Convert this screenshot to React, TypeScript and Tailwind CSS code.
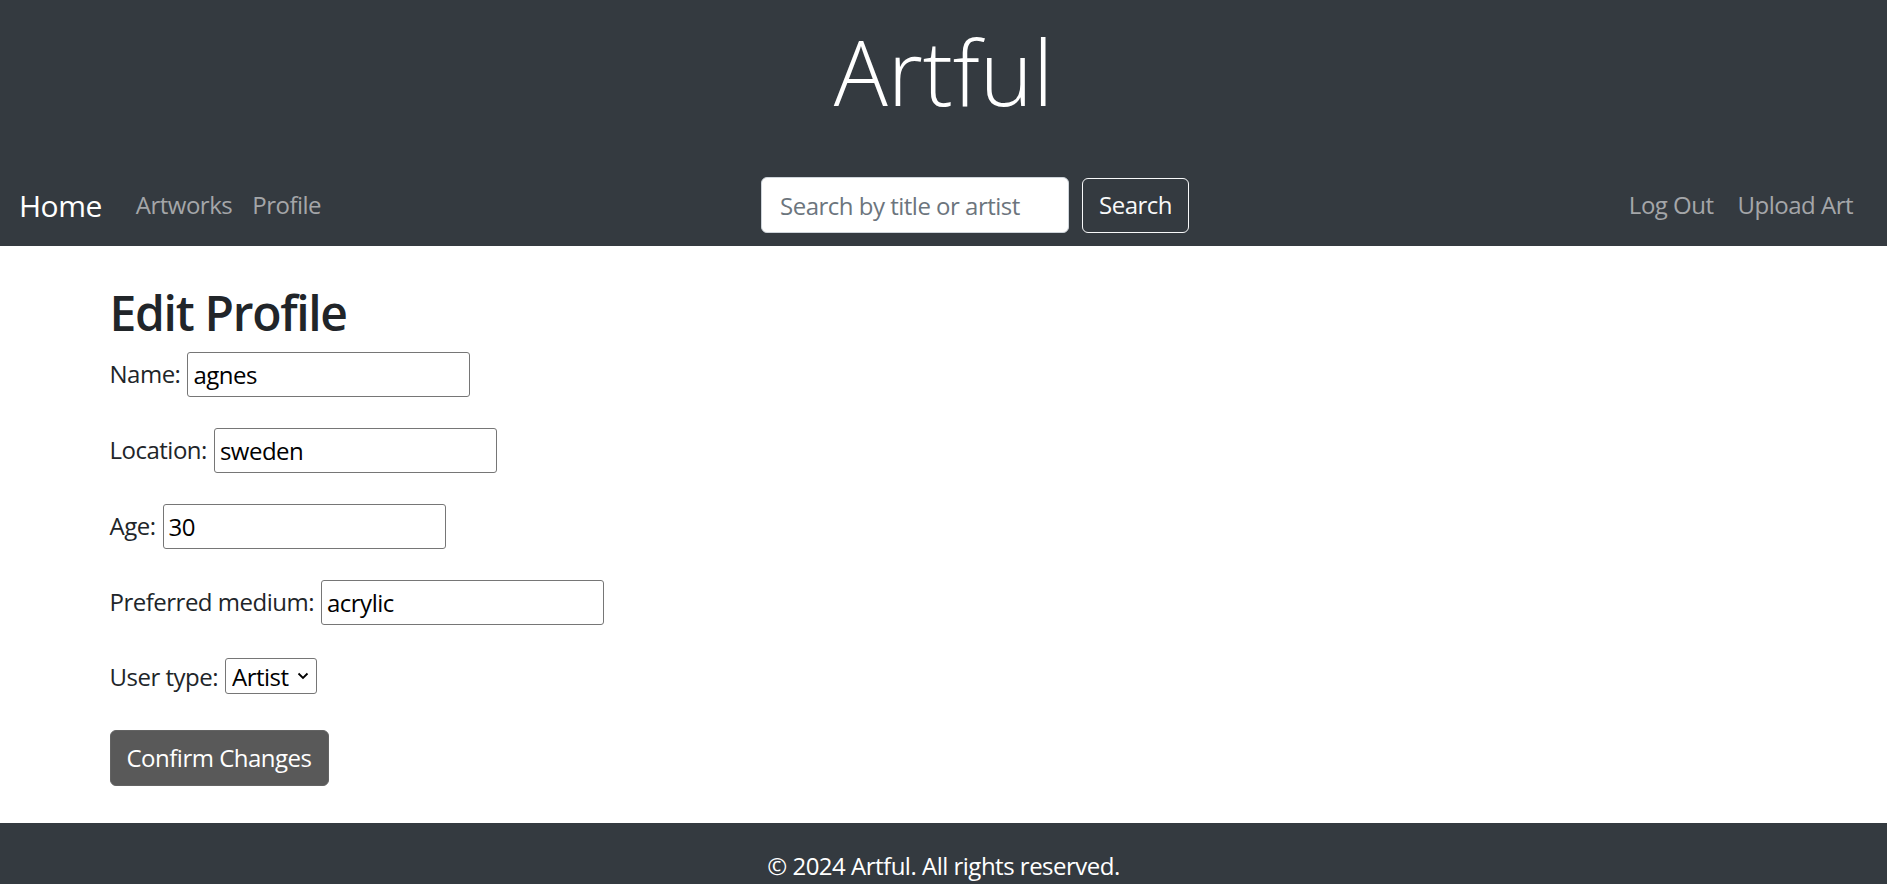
import { useState } from "react";

const fields = [
  { label: "Name:", value: "agnes" },
  { label: "Location:", value: "sweden" },
  { label: "Age:", value: "30" },
  { label: "Preferred medium:", value: "acrylic" },
];

function Header() {
  return (
    <header className="bg-[#343a40]">
      <div className="h-[164px] pt-[26px] text-center">
        <h1 className="text-[90px] font-light leading-none tracking-normal text-white">Artful</h1>
      </div>
      <nav className="flex h-[82px] items-center pl-[19px] pr-[34px]">
        <div className="flex w-[742px] shrink-0 items-center">
          <a className="text-[30px] text-white" href="#">
            Home
          </a>
          <div className="ml-[34px] flex gap-[20px] text-[#a4a6a9]">
            <a href="#">Artworks</a>
            <a href="#">Profile</a>
          </div>
        </div>
        <form className="flex items-center" onSubmit={(e) => e.preventDefault()}>
          <input
            className="h-[56px] w-[308px] rounded-[6px] border border-[#ced4da] bg-white px-[18px] text-[#212529] outline-none placeholder:text-[#6c757d]"
            placeholder="Search by title or artist"
          />
          <button className="ml-[13px] h-[55px] w-[107px] rounded-[6px] border border-[#f8f9fa] text-[#f8f9fa]">
            Search
          </button>
        </form>
        <div className="ml-auto flex gap-[24px] text-[#a4a6a9]">
          <a href="#">Log Out</a>
          <a href="#">Upload Art</a>
        </div>
      </nav>
    </header>
  );
}

export default function App() {
  const [values, setValues] = useState(fields.map((f) => f.value));
  const [userType, setUserType] = useState("artist");

  return (
    <div className="min-h-screen bg-white font-['Open_Sans',sans-serif] text-[24px] leading-normal tracking-[-0.5px] text-[#212529]">
      <Header />

      <main className="mx-auto max-w-[1710px] pl-[21px] pr-[18px] pt-[38px] pb-[37px]">
        <h2 className="text-[48px] font-semibold leading-[1.2] tracking-[-1.3px]">Edit Profile</h2>
        <form className="mt-[10px] flex flex-col" onSubmit={(e) => e.preventDefault()}>
          <div className="flex flex-col gap-[31px]">
            {fields.map((f, i) => (
              <label key={f.label} className="flex h-[45px] items-center">
                <span>{f.label}</span>
                <input
                  className="ml-[7px] h-[45px] w-[283px] rounded-[3px] border border-[#767676] px-[5px] text-black outline-none"
                  value={values[i]}
                  onChange={(e) =>
                    setValues(values.map((v, j) => (j === i ? e.target.value : v)))
                  }
                />
              </label>
            ))}
          </div>

          <label className="mt-[34px] flex h-[36px] items-center">
            <span>User type:</span>
            <div className="relative ml-[7px]">
              <select
                className="h-[36px] w-[92px] appearance-none rounded-[3px] border border-[#767676] pl-[6px] pr-[22px] text-black outline-none"
                value={userType}
                onChange={(e) => setUserType(e.target.value)}
              >
                <option value="artist">Artist</option>
                <option value="viewer">Viewer</option>
              </select>
              <svg
                className="pointer-events-none absolute right-[8px] top-[13px] h-[10px] w-[12px]"
                viewBox="0 0 12 10"
                fill="none"
                stroke="black"
                strokeWidth="1.8"
              >
                <path d="M1.5 2.5 6 7l4.5-4.5" />
              </svg>
            </div>
          </label>

          <div className="mt-[35px]">
            <button className="h-[56px] w-[219px] rounded-[6px] border border-[#636363] bg-[#595959] text-white">
              Confirm Changes
            </button>
          </div>
        </form>
      </main>

      <footer className="bg-[#343a40] pt-[25px] pb-[25px] text-center text-white">
        © 2024 Artful. All rights reserved.
      </footer>
    </div>
  );
}
